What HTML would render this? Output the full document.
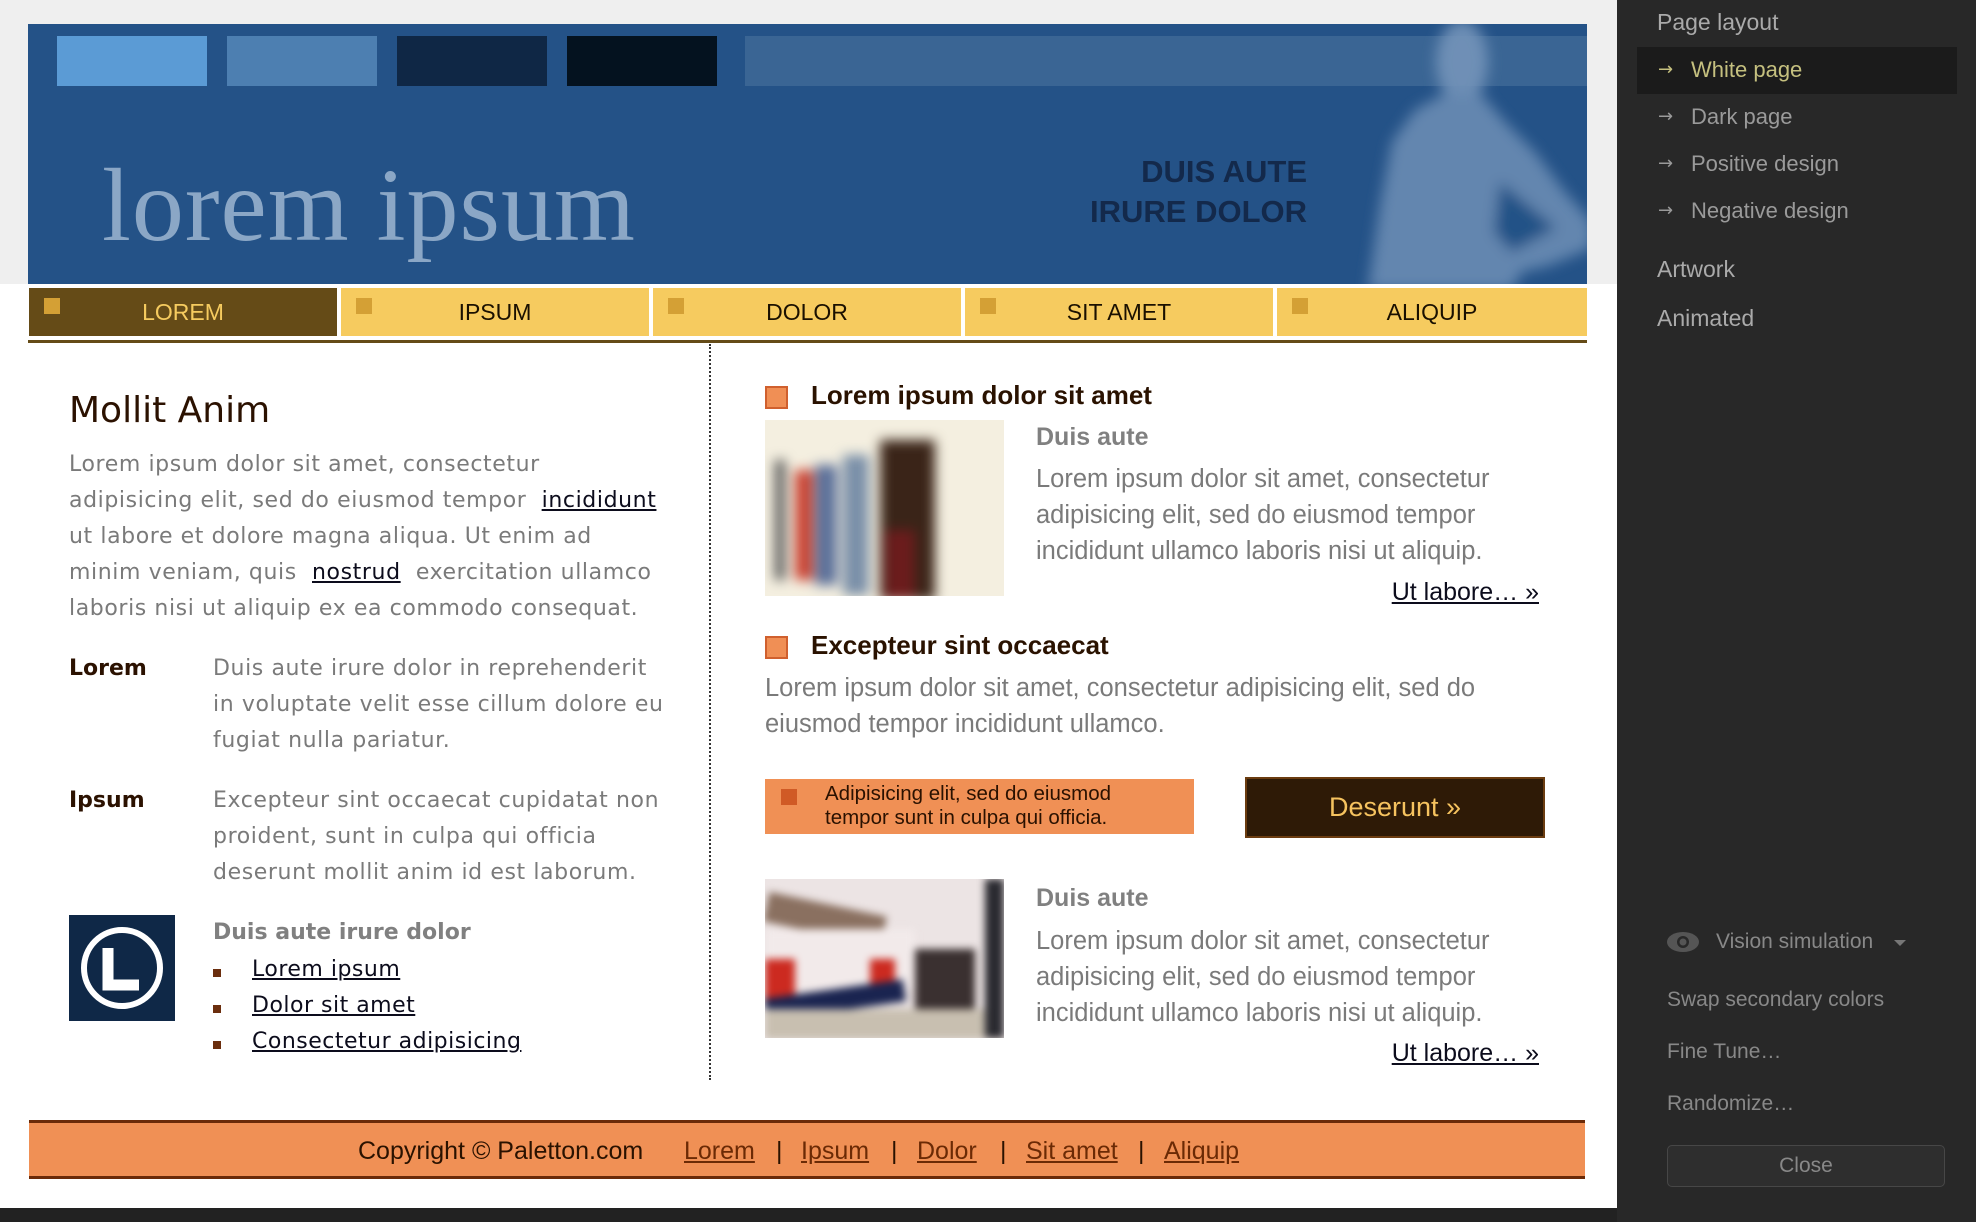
<!DOCTYPE html>
<html><head><meta charset="utf-8"><style>
*{margin:0;padding:0;box-sizing:border-box}
body{width:1976px;height:1222px;background:#222;position:relative;overflow:hidden;font-family:"DejaVu Sans","Liberation Sans",sans-serif}
.a{position:absolute;white-space:nowrap}
.bd{color:#7a7a7a;font-size:22px;line-height:36px;letter-spacing:0.6px}
.lk{color:#0c0c1c;text-decoration:underline}
.nav{position:absolute;top:288px;height:48px;background:#f6cb5f;color:#1a1000;font-family:"Liberation Sans",sans-serif;font-size:23px;line-height:48px;text-align:center}
.nav i{position:absolute;left:15px;top:10px;width:16px;height:16px;background:#d4a035}
.sb{position:absolute;color:#9a9a9a;font-family:"Liberation Sans",sans-serif;font-size:22px;white-space:nowrap}
.ar{display:inline-block;font-family:"DejaVu Sans",sans-serif;font-size:18px;width:33px;position:relative;top:-2px}
.rt{font-family:"Liberation Sans",sans-serif}
.sq{position:absolute;width:23px;height:23px;background:#f08f55;border:2px solid #d0602e}
.h3{position:absolute;font-family:"Liberation Sans",sans-serif;font-weight:bold;font-size:26px;color:#2a1200;white-space:nowrap}
.rb{position:absolute;font-family:"Liberation Sans",sans-serif;font-size:25.5px;line-height:36px;color:#7a7a7a;white-space:nowrap}
.ul{position:absolute;font-family:"Liberation Sans",sans-serif;font-size:25px;color:#0c0c1c;text-decoration:underline;white-space:nowrap}
.ft{position:absolute;top:1137px;font-family:"Liberation Sans",sans-serif;font-size:25px;color:#2a1200;white-space:nowrap}
.fl{color:#6b2a05;text-decoration:underline}
</style></head><body>
<div class="a" style="left:0;top:0;width:1617px;height:1208px;background:#fff"></div>
<div class="a" style="left:0;top:0;width:1617px;height:284px;background:#efefef"></div>
<div class="a" style="left:28px;top:24px;width:1559px;height:260px;background:#245287;overflow:hidden">
  <div class="a" style="left:717px;top:12px;width:842px;height:50px;background:#3a6594"></div>
  <svg class="a" style="left:0;top:0" width="1559" height="260" viewBox="28 24 1559 260">
    <defs><filter id="bl"><feGaussianBlur stdDeviation="7"/></filter></defs>
    <g filter="url(#bl)" opacity="0.9">
      <ellipse cx="1462" cy="62" rx="26" ry="42" fill="#7594ba"/>
      <path d="M1442 95 L1482 95 L1505 122 L1535 152 L1565 192 L1592 222 L1592 248 L1548 266 L1522 272 L1512 290 L1368 290 L1380 205 L1392 142 L1415 110 Z" fill="#6b8cb4"/>
      <path d="M1500 182 L1556 228 L1512 252 L1494 232 Z" fill="#245287"/>
    </g>
  </svg>
  <div class="a" style="left:29px;top:12px;width:150px;height:50px;background:#5b9bd5"></div>
  <div class="a" style="left:199px;top:12px;width:150px;height:50px;background:#4d7fb1"></div>
  <div class="a" style="left:369px;top:12px;width:150px;height:50px;background:#0f2745"></div>
  <div class="a" style="left:539px;top:12px;width:150px;height:50px;background:#04121f"></div>
  <div class="a" style="left:74px;top:122px;font-family:'Liberation Serif',serif;font-size:104px;line-height:120px;color:#8ba7c6;letter-spacing:1px">lorem ipsum</div>
  <div class="a" style="right:280px;top:128px;text-align:right;font-family:'Liberation Sans',sans-serif;font-weight:bold;font-size:31px;line-height:40px;color:#13294b">DUIS AUTE<br>IRURE DOLOR</div>
</div>
<div class="nav" style="left:29px;width:308px;background:#654b17;color:#f6cb5f"><i></i>LOREM</div>
<div class="nav" style="left:341px;width:308px"><i></i>IPSUM</div>
<div class="nav" style="left:653px;width:308px"><i></i>DOLOR</div>
<div class="nav" style="left:965px;width:308px"><i></i>SIT AMET</div>
<div class="nav" style="left:1277px;width:310px"><i></i>ALIQUIP</div>
<div class="a" style="left:28px;top:340px;width:1559px;height:3px;background:#654b17"></div>
<div class="a" style="left:709px;top:344px;height:736px;border-left:2px dotted #333"></div>
<div class="a" style="left:69px;top:390px;font-size:36px;color:#2b1100">Mollit Anim</div>
<div class="a bd" style="left:69px;top:447px">Lorem ipsum dolor sit amet, consectetur<br>adipisicing elit, sed do eiusmod tempor &nbsp;<span class="lk">incididunt</span><br>ut labore et dolore magna aliqua. Ut enim ad<br>minim veniam, quis &nbsp;<span class="lk">nostrud</span> &nbsp;exercitation ullamco<br>laboris nisi ut aliquip ex ea commodo consequat.</div>
<div class="a" style="left:69px;top:656px;font-size:22px;font-weight:bold;color:#2b1100">Lorem</div>
<div class="a bd" style="left:213px;top:651px">Duis aute irure dolor in reprehenderit<br>in voluptate velit esse cillum dolore eu<br>fugiat nulla pariatur.</div>
<div class="a" style="left:69px;top:788px;font-size:22px;font-weight:bold;color:#2b1100">Ipsum</div>
<div class="a bd" style="left:213px;top:783px">Excepteur sint occaecat cupidatat non<br>proident, sunt in culpa qui officia<br>deserunt mollit anim id est laborum.</div>
<div class="a" style="left:69px;top:915px;width:106px;height:106px;background:#0f2847">
  <svg width="106" height="106"><circle cx="53" cy="53" r="38" fill="none" stroke="#fff" stroke-width="6"/><path d="M39 33 V70 H70" fill="none" stroke="#fff" stroke-width="11"/></svg>
</div>
<div class="a" style="left:213px;top:920px;font-size:22px;font-weight:bold;color:#808080">Duis aute irure dolor</div>
<div class="a" style="left:213px;top:969px;width:8px;height:8px;background:#6b2e0e"></div>
<div class="a" style="left:213px;top:1005px;width:8px;height:8px;background:#6b2e0e"></div>
<div class="a" style="left:213px;top:1041px;width:8px;height:8px;background:#6b2e0e"></div>
<div class="a lk" style="left:252px;top:957px;font-size:22px;letter-spacing:0.5px">Lorem ipsum</div>
<div class="a lk" style="left:252px;top:993px;font-size:22px;letter-spacing:0.5px">Dolor sit amet</div>
<div class="a lk" style="left:252px;top:1029px;font-size:22px;letter-spacing:0.5px">Consectetur adipisicing</div>
<div class="sq" style="left:765px;top:386px"></div>
<div class="h3" style="left:811px;top:380px">Lorem ipsum dolor sit amet</div>
<div class="a" style="left:765px;top:420px;width:239px;height:176px;background:#f4efe0;overflow:hidden">
  <div style="position:absolute;inset:0;filter:blur(6px)">
    <div class="a" style="left:30px;top:50px;width:18px;height:110px;background:#c84030"></div>
    <div class="a" style="left:50px;top:45px;width:22px;height:120px;background:#5a6f99"></div>
    <div class="a" style="left:78px;top:35px;width:26px;height:140px;background:#7a8fa8"></div>
    <div class="a" style="left:115px;top:20px;width:55px;height:160px;background:#3a2418"></div>
    <div class="a" style="left:120px;top:110px;width:30px;height:70px;background:#6b1c1c"></div>
    <div class="a" style="left:10px;top:40px;width:10px;height:120px;background:#555"></div>
  </div>
</div>
<div class="a rt" style="left:1036px;top:423px;font-size:25px;font-weight:bold;color:#808080">Duis aute</div>
<div class="rb" style="left:1036px;top:461px">Lorem ipsum dolor sit amet, consectetur<br>adipisicing elit, sed do eiusmod tempor<br>incididunt ullamco laboris nisi ut aliquip.</div>
<div class="ul" style="right:437px;top:578px">Ut labore… »</div>
<div class="sq" style="left:765px;top:636px"></div>
<div class="h3" style="left:811px;top:630px">Excepteur sint occaecat</div>
<div class="rb" style="left:765px;top:670px">Lorem ipsum dolor sit amet, consectetur adipisicing elit, sed do<br>eiusmod tempor incididunt ullamco.</div>
<div class="a" style="left:765px;top:779px;width:429px;height:55px;background:#f09055">
  <div class="a" style="left:16px;top:10px;width:16px;height:16px;background:#d05a25"></div>
  <div class="a rt" style="left:60px;top:3px;font-size:20.5px;line-height:24px;color:#2a1100">Adipisicing elit, sed do eiusmod<br>tempor sunt in culpa qui officia.</div>
</div>
<div class="a rt" style="left:1245px;top:777px;width:300px;height:61px;background:#2e1a06;border:2px solid #6b3c10;color:#f6c35f;font-size:27px;line-height:57px;text-align:center">Deserunt »</div>
<div class="a" style="left:765px;top:879px;width:239px;height:159px;background:#ece4e4;overflow:hidden">
  <div style="position:absolute;inset:0;filter:blur(4px)">
    <div class="a" style="left:0;top:25px;width:120px;height:30px;background:#8a7060;transform:rotate(12deg)"></div>
    <div class="a" style="left:0;top:50px;width:150px;height:60px;background:#f2eaea"></div>
    <div class="a" style="left:0;top:80px;width:30px;height:40px;background:#cc2a20"></div>
    <div class="a" style="left:105px;top:80px;width:25px;height:35px;background:#cc2a20"></div>
    <div class="a" style="left:0;top:110px;width:140px;height:22px;background:#1a2450;transform:rotate(-8deg)"></div>
    <div class="a" style="left:0;top:130px;width:239px;height:30px;background:#c8bfb0"></div>
    <div class="a" style="left:150px;top:70px;width:60px;height:60px;background:#3a3030"></div>
    <div class="a" style="left:220px;top:0;width:19px;height:159px;background:#2a2a30"></div>
  </div>
</div>
<div class="a rt" style="left:1036px;top:884px;font-size:25px;font-weight:bold;color:#808080">Duis aute</div>
<div class="rb" style="left:1036px;top:923px">Lorem ipsum dolor sit amet, consectetur<br>adipisicing elit, sed do eiusmod tempor<br>incididunt ullamco laboris nisi ut aliquip.</div>
<div class="ul" style="right:437px;top:1039px">Ut labore… »</div>
<div class="a" style="left:29px;top:1120px;width:1556px;height:59px;background:#f09055;border-top:3px solid #6b2a08;border-bottom:3px solid #6b2a08"></div>
<div class="ft" style="left:358px">Copyright © Paletton.com</div>
<div class="ft" style="left:684px"><span class="fl">Lorem</span></div>
<div class="ft" style="left:776px">|</div>
<div class="ft" style="left:801px"><span class="fl">Ipsum</span></div>
<div class="ft" style="left:891px">|</div>
<div class="ft" style="left:917px"><span class="fl">Dolor</span></div>
<div class="ft" style="left:1000px">|</div>
<div class="ft" style="left:1026px"><span class="fl">Sit amet</span></div>
<div class="ft" style="left:1138px">|</div>
<div class="ft" style="left:1164px"><span class="fl">Aliquip</span></div>
<div class="a" style="left:1617px;top:0;width:359px;height:1222px;background:#282828"></div>
<div class="sb" style="left:1657px;top:9px;color:#aaa;font-size:23px">Page layout</div>
<div class="a" style="left:1637px;top:47px;width:320px;height:47px;background:#1b1b1b"></div>
<div class="sb" style="left:1658px;top:57px;color:#c5c07f"><span class="ar">→</span>White page</div>
<div class="sb" style="left:1658px;top:104px"><span class="ar">→</span>Dark page</div>
<div class="sb" style="left:1658px;top:151px"><span class="ar">→</span>Positive design</div>
<div class="sb" style="left:1658px;top:198px"><span class="ar">→</span>Negative design</div>
<div class="sb" style="left:1657px;top:256px;color:#aaa;font-size:23px">Artwork</div>
<div class="sb" style="left:1657px;top:305px;color:#aaa;font-size:23px">Animated</div>
<svg class="a" style="left:1666px;top:931px" width="34" height="22"><ellipse cx="17" cy="11" rx="16" ry="10" fill="#555"/><circle cx="17" cy="11" r="6" fill="#282828"/><circle cx="17" cy="11" r="3.5" fill="#555"/></svg>
<div class="sb" style="left:1716px;top:930px;color:#888;font-size:21px">Vision simulation</div>
<div class="a" style="left:1894px;top:940px;border-left:6px solid transparent;border-right:6px solid transparent;border-top:6px solid #777"></div>
<div class="sb" style="left:1667px;top:988px;color:#888;font-size:21px">Swap secondary colors</div>
<div class="sb" style="left:1667px;top:1040px;color:#888;font-size:21px">Fine Tune…</div>
<div class="sb" style="left:1667px;top:1092px;color:#888;font-size:21px">Randomize…</div>
<div class="a" style="left:1667px;top:1145px;width:278px;height:42px;background:#2e2e2e;border:1px solid #474747;border-radius:5px;color:#888;font-family:'Liberation Sans',sans-serif;font-size:21px;line-height:40px;text-align:center">Close</div>
</body></html>
